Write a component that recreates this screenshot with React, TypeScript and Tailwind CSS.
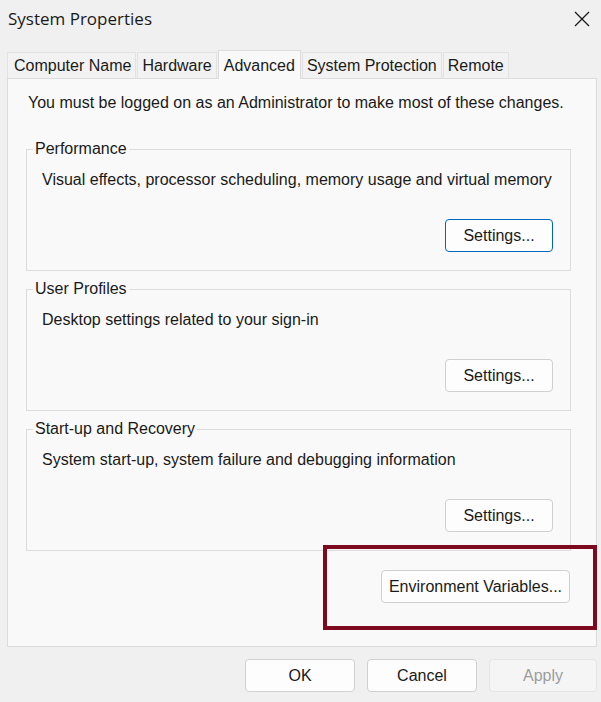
import { ReactNode } from 'react';

const tabs = ['Computer Name', 'Hardware', 'Advanced', 'System Protection', 'Remote'];

const WinButton = ({
  children,
  focused = false,
  disabled = false,
  className = '',
}: {
  children: ReactNode;
  focused?: boolean;
  disabled?: boolean;
  className?: string;
}) => (
  <button
    className={
      'h-[33px] rounded-[4px] border text-[16px] ' +
      (focused
        ? 'border-[#0067c0] bg-[#fdfdfd] text-[#1a1a1a] '
        : disabled
        ? 'border-[#e5e5e5] bg-[#f5f5f5] text-[#9d9d9d] '
        : 'border-[#d0d0d0] bg-[#fdfdfd] text-[#1a1a1a] ') +
      className
    }
  >
    {children}
  </button>
);

const GroupBox = ({ title, text, focused }: { title: string; text: string; focused?: boolean }) => (
  <fieldset className="h-[131px] w-[545px] border border-[#dcdcdc]">
    <legend className="ml-[6px] px-[2px] text-[16px] leading-[18px] text-[#1a1a1a]">{title}</legend>
    <div className="pl-[15px] pr-[17px]">
      <p className="mt-[12px] text-[16px] leading-[20px] text-[#1a1a1a]">{text}</p>
      <div className="mt-[29px] flex justify-end">
        <WinButton focused={focused} className="w-[108px]">
          Settings...
        </WinButton>
      </div>
    </div>
  </fieldset>
);

export default function App() {
  return (
    <div
      className="relative h-[702px] w-[601px] overflow-hidden bg-[#f0f0f0] text-[#1a1a1a]"
      style={{ fontFamily: '"Liberation Sans", Arial, sans-serif' }}
    >
      {/* title bar */}
      <div className="flex h-[37px] items-center justify-between pl-[8px] pr-[10px]">
        <span className="text-[17px] text-[#1a1a1a]" style={{ fontFamily: '"Open Sans", "Noto Sans", sans-serif' }}>
          System Properties
        </span>
        <svg width="16" height="16" viewBox="0 0 16 16" className="mr-[1px]">
          <path d="M1 1L15 15M15 1L1 15" stroke="#1a1a1a" strokeWidth="1.3" />
        </svg>
      </div>

      {/* tabs */}
      <div className="mt-[13px] flex items-end pl-[7px]">
        {tabs.map((t, i) =>
          t === 'Advanced' ? (
            <div
              key={t}
              className="relative z-10 -mb-px mr-[1px] flex h-[29px] items-start border border-b-0 border-[#dcdcdc] bg-[#f9f9f9] px-[5px] pt-[3px] text-[16px]"
            >
              {t}
            </div>
          ) : (
            <div
              key={t}
              className={
                'mr-[1px] flex h-[26px] items-center border border-b-0 border-[#e2e2e2] bg-[#f2f2f2] text-[16px] ' +
                (i === 0 ? 'pl-[6px] pr-[4px]' : 'px-[4px]')
              }
            >
              {t}
            </div>
          )
        )}
      </div>

      {/* panel */}
      <div className="ml-[7px] h-[569px] w-[590px] border border-[#dcdcdc] bg-[#f9f9f9]">
        <p className="ml-[20px] mt-[14px] text-[16px] leading-[20px]">
          You must be logged on as an Administrator to make most of these changes.
        </p>
        <div className="ml-[18px] mt-[27px] flex flex-col gap-[9px]">
          <GroupBox
            title="Performance"
            text="Visual effects, processor scheduling, memory usage and virtual memory"
            focused
          />
          <GroupBox title="User Profiles" text="Desktop settings related to your sign-in" />
          <GroupBox title="Start-up and Recovery" text="System start-up, system failure and debugging information" />
        </div>
        <div className="mr-[26px] mt-[19px] flex justify-end">
          <WinButton className="w-[189px]">Environment Variables...</WinButton>
        </div>
      </div>

      {/* bottom buttons */}
      <div className="mt-[12px] flex justify-end gap-[12px] pr-[4px]">
        <WinButton className="w-[110px]">OK</WinButton>
        <WinButton className="w-[110px]">Cancel</WinButton>
        <WinButton disabled className="w-[108px]">
          Apply
        </WinButton>
      </div>

      {/* annotation highlight */}
      <div className="absolute left-[323px] top-[545px] h-[85px] w-[274px] border-[4px] border-[#7d0a1f]" />
    </div>
  );
}
